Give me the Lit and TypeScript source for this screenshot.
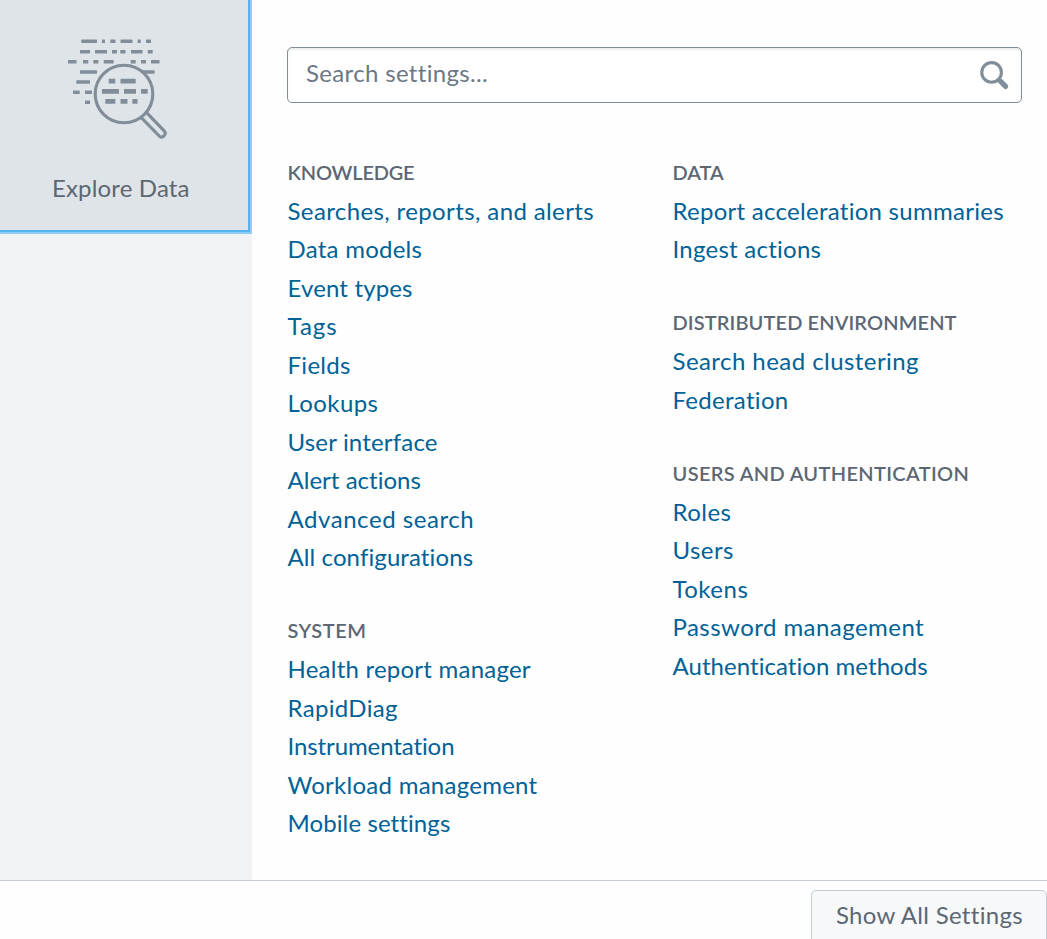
import { LitElement, html, css, svg } from "lit";
import { customElement } from "lit/decorators.js";

interface Item { label: string; tracking: number }
interface Group { title: string; tracking: number; items: Item[] }

const item = (label: string, tracking: number): Item => ({ label, tracking });

const LEFT: Group[] = [
  {
    title: "KNOWLEDGE", tracking: -0.2,
    items: [
      item("Searches, reports, and alerts", 0.38), item("Data models", 0.25), item("Event types", 0.15),
      item("Tags", 1), item("Fields", 0.3), item("Lookups", 0.4), item("User interface", 0.18),
      item("Alert actions", 0.02), item("Advanced search", 0.55), item("All configurations", 0.1),
    ],
  },
  {
    title: "SYSTEM", tracking: 0.5,
    items: [
      item("Health report manager", 0.23), item("RapidDiag", 0.32), item("Instrumentation", -0.1),
      item("Workload management", 0.26), item("Mobile settings", 0.1),
    ],
  },
];

const RIGHT: Group[] = [
  {
    title: "DATA", tracking: -0.05,
    items: [item("Report acceleration summaries", 0.27), item("Ingest actions", 0.25)],
  },
  {
    title: "DISTRIBUTED ENVIRONMENT", tracking: 0.11,
    items: [item("Search head clustering", 0.44), item("Federation", 0.3)],
  },
  {
    title: "USERS AND AUTHENTICATION", tracking: 0.34,
    items: [
      item("Roles", 0.45), item("Users", 0.45), item("Tokens", 0.5),
      item("Password management", 0.45), item("Authentication methods", 0.05),
    ],
  },
];

// Each row of dashes: top edge, height, then [start, end] pairs.
const DASHES: [number, number, [number, number][]][] = [
  [39.6, 3.5, [[81.3, 97], [102, 105], [110.3, 115.5], [120.5, 132.5], [137.7, 140.7], [146, 151]]],
  [49.9, 3.5, [[80, 90], [95, 107], [112, 117], [120.3, 125.5], [131, 142.5], [147.7, 152.7]]],
  [59.9, 3.5, [[68, 76.5], [83, 88.3], [93.3, 98.5], [103.7, 113.7], [130.7, 135.7], [141, 146], [151, 159.5]]],
  [70.2, 3.5, [[80, 97], [142, 154.5]]],
  [80.2, 3.5, [[76.3, 90]]],
  [90.4, 3.5, [[73, 79.7], [85, 92]]],
  [100.6, 3.5, [[85, 90]]],
  [78.8, 4.8, [[108.7, 115.3], [120.5, 135.7]]],
  [89, 4.8, [[102, 119], [124, 136], [141, 147.7]]],
  [99, 4.8, [[105.3, 115.3], [120.5, 127.5], [132.3, 137.5]]],
];

@customElement("app-root")
export class AppRoot extends LitElement {
  static styles = css`
    :host {
      display: block; font-family: Lato, "Liberation Sans", sans-serif; color: #5c6773;
      font-variant-ligatures: none;
    }
    .page { width: 1047px; height: 939px; overflow: hidden; display: flex; flex-direction: column; background: #fefefe; }
    .main { display: flex; height: 880px; flex: none; }
    .side { width: 252px; flex: none; background: #f1f3f5; }
    .tile {
      box-sizing: border-box; height: 234px; width: 252px; display: flex; flex-direction: column;
      align-items: flex-start; background: #dfe4e8; border: solid #8accf4; border-width: 0 2px 2px 0;
      border-radius: 0 0 2px 0; padding-top: 38px; box-shadow: inset -2px -2px 0 #52b5f0;
    }
    .tile svg { display: block; margin-left: 67px; }
    .tile-label {
      margin: 31px 0 0 52px; font-size: 24px; line-height: 34px; white-space: nowrap; letter-spacing: 0.15px;
    }
    .content { padding: 47px 0 0 35px; flex: 1; }
    .search {
      box-sizing: border-box; width: 735px; height: 56px; border: 1px solid #818d99; border-radius: 5px;
      display: flex; align-items: center; justify-content: space-between; padding: 0 11px 0 18px;
      background: #fff; box-shadow: inset 0 2px 2px #eceeef; font-size: 24px; line-height: 34px; color: #6b7785;
    }
    .search-text { padding-bottom: 4px; letter-spacing: 0.34px; }
    .columns { display: grid; grid-template-columns: 385px 1fr; margin-top: 51.9px; padding-left: 0.5px; }
    .group { margin-bottom: 36.7px; }
    h2 { margin: 0; font-size: 20px; line-height: 34.5px; height: 36.8px; font-weight: 600; white-space: nowrap; }
    ul { list-style: none; margin: 0; padding: 0; }
    li { height: 38.5px; line-height: 38.5px; }
    a { color: #006297; font-size: 24px; text-decoration: none; white-space: nowrap; }
    .footer { flex: 1; border-top: 1px solid #c3cbd4; display: flex; justify-content: flex-end; padding-top: 9px; }
    .button {
      box-sizing: border-box; width: 236px; height: 60px; border: 1px solid #c3cbd4; border-radius: 5px;
      background: #f7f8fa; padding: 7px 0 0 24px; font-size: 24px; line-height: 34px; white-space: nowrap;
      letter-spacing: 0.3px;
    }
  `;

  private group(g: Group) {
    return html`<section class="group">
      <h2 style="letter-spacing:${g.tracking}px">${g.title}</h2>
      <ul>${g.items.map((i) => html`<li><a style="letter-spacing:${i.tracking}px">${i.label}</a></li>`)}</ul>
    </section>`;
  }

  render() {
    return html`<div class="page">
      <div class="main">
        <div class="side">
          <div class="tile">
            <svg width="101" height="102" viewBox="67 38 101 102">
              <g fill="#818d99">
                ${DASHES.map(([y, h, runs]) => runs.map(([a, b]) => svg`<rect x=${a} y=${y} width=${b - a} height=${h} rx="0.3"></rect>`))}
              </g>
              <g fill="none" stroke="#818d99" stroke-width="3.1">
                <circle cx="124" cy="94" r="28.8"></circle>
                <path d="M141.3 117.7L159.3 136.2A3.65 3.65 0 0 0 164.4 131.1L146.6 112.6"></path>
              </g>
            </svg>
            <div class="tile-label">Explore Data</div>
          </div>
        </div>
        <div class="content">
          <div class="search">
            <span class="search-text">Search settings...</span>
            <svg width="32" height="32" viewBox="978 59 32 32" fill="none" stroke="#818d99">
              <circle cx="991.6" cy="72.4" r="9.8" stroke-width="3.1"></circle>
              <path d="M998.4 79.2L1001 81.8" stroke-width="4"></path>
              <path d="M1000.6 81.4L1005.6 86.4" stroke-width="5.2" stroke-linecap="round"></path>
            </svg>
          </div>
          <div class="columns">
            <div>${LEFT.map((g) => this.group(g))}</div>
            <div>${RIGHT.map((g) => this.group(g))}</div>
          </div>
        </div>
      </div>
      <div class="footer"><div class="button">Show All Settings</div></div>
    </div>`;
  }
}
